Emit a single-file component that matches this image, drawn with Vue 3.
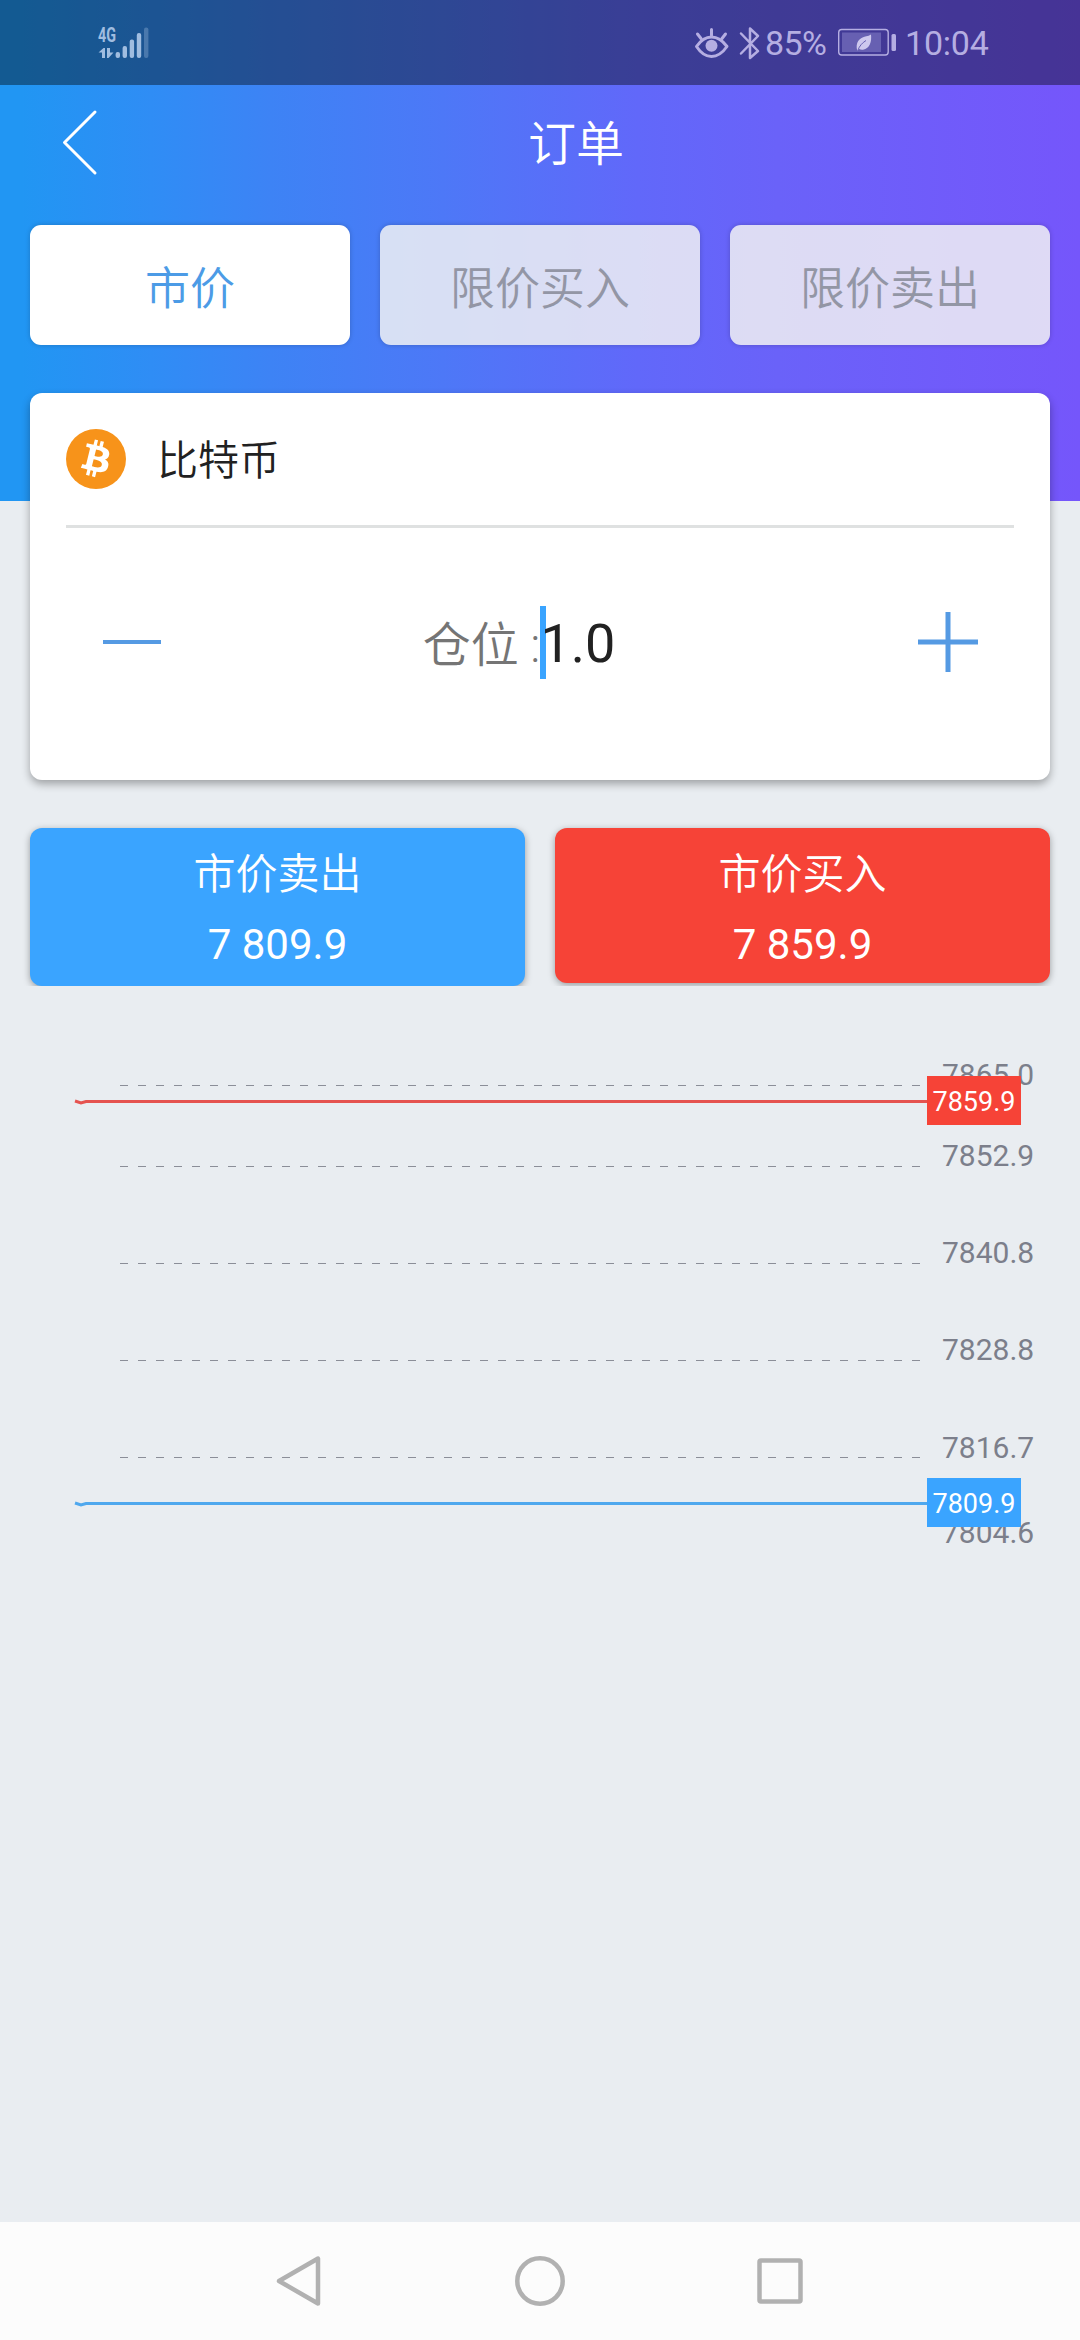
<script setup>
import { ref } from 'vue'

const tabs = ['市价', '限价买入', '限价卖出']
const activeTab = ref(0)
const volume = ref('1.0')

const gridLines = [1085.5, 1166.5, 1263.5, 1360.5, 1457.5]
const axisLabels = [
  { y: 1085, text: '7865.0' },
  { y: 1166, text: '7852.9' },
  { y: 1263, text: '7840.8' },
  { y: 1360, text: '7828.8' },
  { y: 1458, text: '7816.7' },
  { y: 1543, text: '7804.6' },
]
const quotes = [
  { y: 1101, text: '7859.9', kind: 'ask' },
  { y: 1503, text: '7809.9', kind: 'bid' },
]
</script>

<template>
  <div class="screen">
    <header class="top">
      <div class="status">
        <svg class="signal" width="56" height="40" viewBox="96 22 56 40">
          <text x="98" y="41" textLength="18" lengthAdjust="spacingAndGlyphs" class="net">4G</text>
          <path d="M98.500 51.500l5-4.500h1.500v10h-3v-5.500zM107 47h3v4.500h3.500l-5 5.500h-1.500z" />
          <rect x="115.600" y="51" width="4.400" height="6" rx="2" />
          <rect x="122.600" y="45" width="4.400" height="12" rx="2" />
          <rect x="129.700" y="38.500" width="4.400" height="18.500" rx="2" />
          <rect x="136.800" y="32" width="4.400" height="25" rx="2" />
          <rect x="144" y="26.500" width="4.400" height="30.500" rx="2" opacity=".35" />
        </svg>
        <div class="status-right">
          <svg width="72" height="40" viewBox="692 22 72 40" fill="none" stroke="#b5aee2" stroke-linecap="round" stroke-linejoin="round">
            <path d="M696.500 45.500Q703 36 711.500 36T727 45.500Q720 55.500 711.500 55.500T696.500 45.500z" stroke-width="3" />
            <circle cx="711.500" cy="44.800" r="6" fill="#b5aee2" stroke="none" />
            <path d="M711.500 28.500v6M697.500 33l3.500 4.500M725.500 33l-3.500 4.500" stroke-width="3" />
            <path d="M741 32.500l17 17.500-8 7V27.500l8 7.500-17 17.500" stroke-width="2.500" />
          </svg>
          <span class="pct">85%</span>
          <svg class="battery" width="60" height="30" viewBox="836 28 60 30">
            <rect x="837.700" y="29.500" width="49.500" height="25.500" rx="3" fill="none" stroke="#b5aee2" stroke-width="1.400" />
            <rect x="841" y="32.500" width="39" height="19.500" fill="#6760b2" />
            <rect x="890.500" y="34" width="4.500" height="17" rx="1.500" fill="#b5aee2" />
            <path d="M870 34.500c.8 7-1 14-8 15.200-1.600.2-3-.2-3.800-.6l-2 1.500c-2-8 2-12.500 8-14q4-.8 5.800-2.100z" fill="#cdc8ee" />
            <path d="M857 50c1.500-4 4-7 8-9.500" fill="none" stroke="#6760b2" stroke-width="1" />
          </svg>
          <span class="clock">10:04</span>
        </div>
      </div>
      <div class="titlebar">
        <svg class="back" width="40" height="68" viewBox="60 108 40 68">
          <path d="M95 112L64.500 142.500L95 173" fill="none" stroke="#fff" stroke-width="3" stroke-linecap="round" stroke-linejoin="round" />
        </svg>
        <h1>订单</h1>
      </div>
      <nav class="tabs">
        <button v-for="(tab, i) in tabs" :key="tab" :class="{ active: i === activeTab }" @click="activeTab = i">{{ tab }}</button>
      </nav>
    </header>

    <section class="card">
      <div class="asset">
        <svg width="60" height="60" viewBox="0 0 64 64">
          <circle cx="32" cy="32" r="32" fill="#f7931a" />
          <path fill="#fff" d="M46.100 27.400c.6-4.300-2.600-6.500-7-8.100l1.400-5.700-3.500-.9-1.400 5.600c-.9-.2-1.800-.5-2.800-.7l1.400-5.600-3.400-.9-1.500 5.700c-.7-.2-1.500-.3-2.200-.5l-4.800-1.200-.9 3.700s2.600.6 2.500.6c1.400.4 1.700 1.300 1.600 2l-3.900 15.800c-.2.4-.6 1.100-1.600.8l-2.500-.6-1.700 4 4.500 1.100 2.500.7-1.500 5.700 3.500.9 1.400-5.700c.9.3 1.900.5 2.800.7l-1.400 5.700 3.400.9 1.500-5.800c5.900 1.100 10.300.7 12.200-4.700 1.500-4.300-.1-6.700-3.200-8.300 2.300-.5 4-2 4.500-5.100zm-7.900 11c-1 4.300-8.200 2-10.600 1.400l1.900-7.600c2.300.6 9.800 1.700 8.700 6.200zm1.100-11.100c-1 3.900-7 1.900-8.900 1.400l1.700-6.900c2 .5 8.200 1.400 7.200 5.500z" />
        </svg>
        <span>比特币</span>
      </div>
      <div class="stepper">
        <svg width="64" height="64" viewBox="0 0 64 64"><path d="M3 32h58" stroke="#559ae3" stroke-width="4" /></svg>
        <div class="volume">
          <span class="label">仓位 :</span><i class="caret"></i><span class="value">{{ volume }}</span>
        </div>
        <svg width="64" height="64" viewBox="0 0 64 64"><path d="M2 32h60M32 2v60" stroke="#559ae3" stroke-width="5" /></svg>
      </div>
    </section>

    <section class="actions">
      <button class="sell"><span>市价卖出</span><b>7 809.9</b></button>
      <button class="buy"><span>市价买入</span><b>7 859.9</b></button>
    </section>

    <svg class="chart" width="1080" height="560" viewBox="0 1016 1080 560">
      <line v-for="y in gridLines" :key="y" x1="120" x2="920" :y1="y" :y2="y" class="grid" />
      <text v-for="l in axisLabels" :key="l.text" x="942" :y="l.y" class="axis">{{ l.text }}</text>
      <g v-for="q in quotes" :key="q.text" :class="q.kind">
        <path :d="`M75 ${q.y}l6 2 5-1.500H928`" class="line" />
        <rect x="927" :y="q.y - 25" width="94" height="49" />
        <text x="974" :y="q.y + 10" class="tag">{{ q.text }}</text>
      </g>
    </svg>

    <footer class="sysnav">
      <svg width="54" height="54" viewBox="0 0 54 54"><path d="M45 4.500v45L6 27z" /></svg>
      <svg width="54" height="54" viewBox="0 0 54 54"><circle cx="27" cy="27" r="22.700" /></svg>
      <svg width="54" height="54" viewBox="0 0 54 54"><rect x="6.500" y="6.500" width="41" height="41" rx="1.500" /></svg>
    </footer>
  </div>
</template>

<style>
body { margin: 0; }
</style>

<style scoped>
.screen {
  width: 1080px;
  height: 2340px;
  display: flex;
  flex-direction: column;
  overflow: hidden;
  background: #e9edf1;
  font-family: Roboto, "Noto Sans CJK SC", sans-serif;
}
button {
  border: 0;
  padding: 0;
  font-family: inherit;
}
.top {
  height: 501px;
  flex: none;
  background: linear-gradient(90deg, #2196f3 2%, #2f8df5 14%, #3d83f5 25%, #4d78f7 41%, #6168fa 59%, #6a62f9 72%, #7556fb 100%);
}
.status {
  height: 85px;
  box-sizing: border-box;
  padding: 0 91px 0 96px;
  display: flex;
  justify-content: space-between;
  align-items: center;
  background: rgba(0, 0, 0, 0.4);
}
.signal { fill: #a0bde0; }
.net { font-size: 21px; font-weight: 700; }
.status-right {
  display: flex;
  align-items: center;
  font-size: 34px;
  color: #b5aee2;
}
.pct { width: 72px; letter-spacing: -0.6px; margin-left: 1px; }
.battery { margin-right: 8px; }
.clock { width: 84px; letter-spacing: -0.2px; }
.titlebar {
  height: 114px;
  display: flex;
  align-items: center;
}
.back { margin-left: 60px; }
h1 {
  flex: 1;
  margin: 6px 28px 0 0;
  text-align: center;
  color: #fff;
  font-size: 48px;
  line-height: 70px;
  font-weight: 350;
}
.tabs {
  display: flex;
  gap: 30px;
  padding: 26px 30px 0;
}
.tabs button {
  flex: 1;
  height: 120px;
  border-radius: 11px;
  background: rgba(243, 243, 243, 0.84);
  color: #9396a5;
  font-size: 45px;
  font-weight: 350;
  box-shadow: 0 0 5px rgba(0, 0, 0, 0.2);
}
.tabs button.active {
  background: #fff;
  color: #4c9be6;
}
.card {
  flex: none;
  height: 387px;
  margin: -108px 30px 0;
  padding: 0 36px;
  box-sizing: border-box;
  background: #fff;
  border-radius: 12px;
  box-shadow: 0 4px 9px rgba(0, 0, 0, 0.32);
}
.asset {
  height: 135px;
  box-sizing: border-box;
  padding-bottom: 1px;
  display: flex;
  align-items: center;
  gap: 31px;
  border-bottom: 3px solid #dfe1e1;
  font-size: 41px;
  font-weight: 350;
  color: #212121;
}
.asset span { margin-top: -4px; }
.stepper {
  display: flex;
  align-items: center;
  justify-content: space-between;
  padding: 0 34px;
  height: 228px;
}
.volume {
  display: flex;
  align-items: center;
  margin-right: 42px;
}
.label {
  font-size: 48px;
  font-weight: 350;
  color: #757575;
  margin-top: -3px;
}
.caret {
  width: 6px;
  height: 73px;
  margin-right: -6px;
  background: #3aa4ff;
}
.value {
  font-size: 54px;
  color: #212121;
  position: relative;
  margin-top: 2px;
}
.actions {
  flex: none;
  display: flex;
  gap: 30px;
  align-items: flex-start;
  height: 158px;
  margin: 48px 30px 0;
  clip-path: inset(-12px -12px 0 -12px);
}
.actions button {
  flex: 1;
  height: 158px;
  display: flex;
  flex-direction: column;
  align-items: center;
  justify-content: flex-start;
  border-radius: 12px;
  color: #fff;
  font-size: 42px;
  box-shadow: 0 2px 7px rgba(0, 0, 0, 0.35);
}
.actions span { line-height: 60px; margin-top: 17px; font-weight: 350; }
.actions b { line-height: 60px; margin-top: 10px; font-weight: 400; }
.actions .sell { background: #3aa4ff; }
.actions .buy { background: #f64337; height: 155px; }
.chart {
  display: block;
  flex: none;
  margin-top: 30px;
}
.grid {
  stroke: #8b8e98;
  stroke-width: 1;
  stroke-dasharray: 8 10;
}
.axis { font-size: 30px; fill: #7c7f8b; }
.line { fill: none; stroke-width: 3; }
.tag { font-size: 27px; fill: #fff; text-anchor: middle; }
.ask rect { fill: #f64337; }
.ask .line { stroke: #e55350; }
.bid rect { fill: #3aa4ff; }
.bid .line { stroke: #4fa8ee; }
.sysnav {
  height: 118px;
  margin-top: auto;
  display: flex;
  align-items: center;
  justify-content: center;
  gap: 186px;
  background: #fcfcfc;
}
.sysnav svg {
  fill: none;
  stroke: #b1b1b1;
  stroke-width: 4.5;
  stroke-linejoin: round;
}
</style>
